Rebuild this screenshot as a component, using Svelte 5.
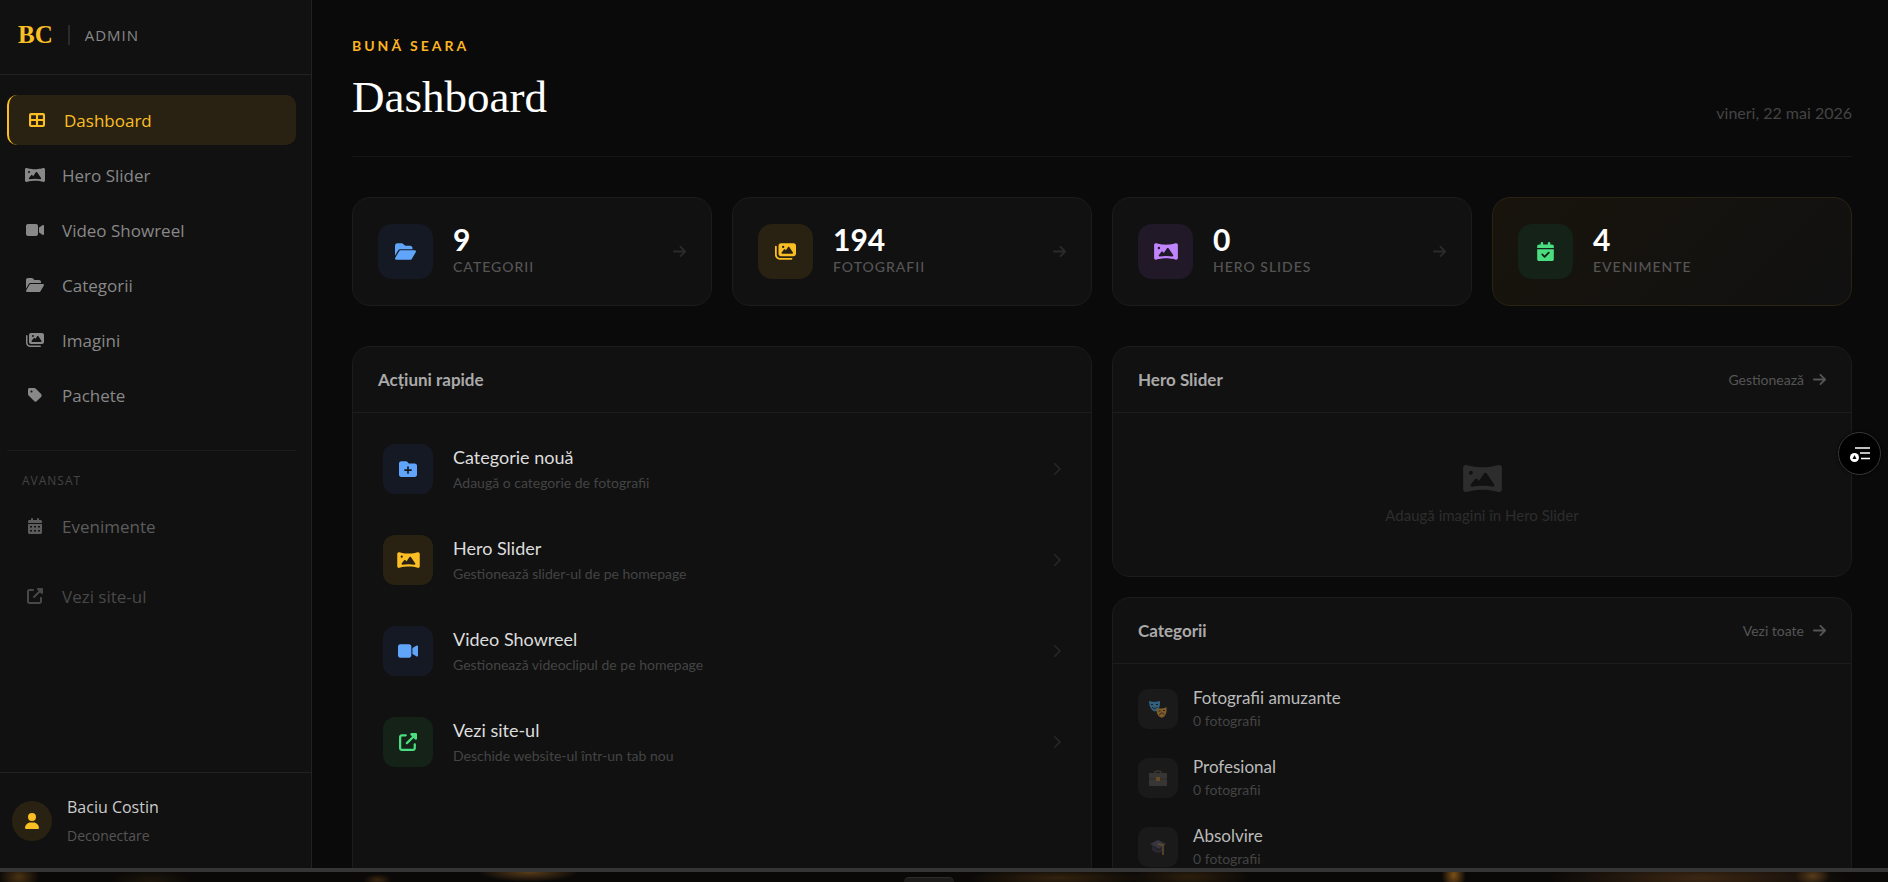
<script>
  const icons = {
    grid: { w: 512, d: 'M64 32H448a64 64 0 0 1 64 64V416a64 64 0 0 1-64 64H64a64 64 0 0 1-64-64V96A64 64 0 0 1 64 32zM68 100V226H222V100zM290 100V226H444V100zM68 290V412H222V290zM290 290V412H444V290z' },
    panorama: { w: 640, d: 'M45.6 32C20.4 32 0 52.4 0 77.6V434.4C0 459.6 20.4 480 45.6 480c5.1 0 10-.8 14.7-2.4C74.6 472.8 177.6 440 320 440s245.4 32.8 259.6 37.6c4.7 1.6 9.7 2.4 14.7 2.4c25.2 0 45.6-20.4 45.6-45.6V77.6C640 52.4 619.6 32 594.4 32c-5 0-10 .8-14.7 2.4C565.4 39.2 462.4 72 320 72S74.6 39.2 60.4 34.4C55.6 32.8 50.7 32 45.6 32zM96 160a32 32 0 1 1 64 0 32 32 0 1 1 -64 0zm272 0c7.9 0 15.4 3.9 19.8 10.5L512.3 353c5.4 8 5.6 18.4 .4 26.5s-14.7 12.3-24.2 10.7C442.7 382.4 385.2 376 320 376c-65.6 0-123.4 6.5-169.3 14.4c-9.8 1.7-19.7-2.9-24.7-11.5s-4.3-19.4 1.9-27.2L197.3 265c4.6-5.7 11.4-9 18.7-9s14.2 3.3 18.7 9l26.4 33.1 87-127.6c4.5-6.6 11.9-10.5 19.8-10.5z' },
    video: { w: 576, d: 'M0 128C0 92.7 28.7 64 64 64H320c35.3 0 64 28.7 64 64V384c0 35.3-28.7 64-64 64H64c-35.3 0-64-28.7-64-64V128zM559.1 99.8c10.4 5.6 16.9 16.4 16.9 28.2V384c0 11.8-6.5 22.6-16.9 28.2s-23 5-32.9-1.6l-96-64L416 337.1V320 192 174.9l14.2-9.5 96-64c9.8-6.5 22.4-7.2 32.9-1.6z' },
    folder: { w: 576, d: 'M88.7 223.8L0 375.8V96C0 60.7 28.7 32 64 32H181.5c17 0 33.3 6.7 45.3 18.7l26.5 26.5c12 12 28.3 18.7 45.3 18.7H416c35.3 0 64 28.7 64 64v32H144c-22.8 0-43.8 12.1-55.3 31.8zm27.6 16.1C122.1 230 132.6 224 144 224H544c11.5 0 22 6.1 27.7 16.1s5.7 22.2-.1 32.1l-112 192C453.9 474 443.4 480 432 480H32c-11.5 0-22-6.1-27.7-16.1s-5.7-22.2 .1-32.1l112-192z' },
    images: { w: 576, d: 'M160 32c-35.3 0-64 28.7-64 64V320c0 35.3 28.7 64 64 64H512c35.3 0 64-28.7 64-64V96c0-35.3-28.7-64-64-64H160zM396 138.7l96 144c4.9 7.4 5.4 16.8 1.2 24.6S480.9 320 472 320H328 280 200c-9.2 0-17.6-5.3-21.6-13.6s-2.9-18.2 2.9-25.4l64-80c4.6-5.7 11.4-9 18.7-9s14.2 3.3 18.7 9l17.3 21.6 56-84C360.5 132 368 128 376 128s15.5 4 20 10.7zM192 128a32 32 0 1 1 64 0 32 32 0 1 1 -64 0zM48 120c0-13.3-10.7-24-24-24S0 106.7 0 120V344c0 75.1 60.9 136 136 136H456c13.3 0 24-10.7 24-24s-10.7-24-24-24H136c-48.6 0-88-39.4-88-88V120z' },
    tag: { w: 448, d: 'M0 80V229.5c0 17 6.7 33.3 18.7 45.3l176 176c25 25 65.5 25 90.5 0L418.7 317.3c25-25 25-65.5 0-90.5l-176-176c-12-12-28.3-18.7-45.3-18.7H48C21.5 32 0 53.5 0 80zm112 32a32 32 0 1 1 0 64 32 32 0 1 1 0-64z' },
    calendar: { w: 448, d: 'M96 32a32 32 0 0 1 64 0V64H288V32a32 32 0 0 1 64 0V64h48c26.5 0 48 21.5 48 48v48H0V112C0 85.5 21.5 64 48 64H96zM0 192H448V464c0 26.5-21.5 48-48 48H48c-26.5 0-48-21.5-48-48zM64 256v48h64v-48zM192 256v48h64v-48zM320 256v48h64v-48zM64 384v48h64v-48zM192 384v48h64v-48zM320 384v48h64v-48z' },
    calendarCheck: { w: 448, d: 'M128 0c17.7 0 32 14.3 32 32V64H288V32c0-17.7 14.3-32 32-32s32 14.3 32 32V64h48c26.5 0 48 21.5 48 48v48H0V112C0 85.5 21.5 64 48 64H96V32c0-17.7 14.3-32 32-32zM0 192H448V464c0 26.5-21.5 48-48 48H48c-26.5 0-48-21.5-48-48V192zM329 305c9.4-9.4 9.4-24.6 0-33.9s-24.6-9.4-33.9 0l-95 95-47-47c-9.4-9.4-24.6-9.4-33.9 0s-9.4 24.6 0 33.9l64 64c9.4 9.4 24.6 9.4 33.9 0L329 305z' },
    external: { w: 512, d: 'M352 0c-12.9 0-24.6 7.8-29.6 19.8s-2.2 25.7 6.9 34.9L370.7 96 201.4 265.4c-12.5 12.5-12.5 32.8 0 45.3s32.8 12.5 45.3 0L416 141.3l41.4 41.4c9.2 9.2 22.9 11.9 34.9 6.9s19.8-16.6 19.8-29.6V32c0-17.7-14.3-32-32-32H352zM80 32C35.8 32 0 67.8 0 112V432c0 44.2 35.8 80 80 80H400c44.2 0 80-35.8 80-80V320c0-17.7-14.3-32-32-32s-32 14.3-32 32V432c0 8.8-7.2 16-16 16H80c-8.8 0-16-7.2-16-16V112c0-8.8 7.2-16 16-16H192c17.7 0 32-14.3 32-32s-14.3-32-32-32H80z' },
    user: { w: 448, d: 'M224 256A128 128 0 1 0 224 0a128 128 0 1 0 0 256zm-45.7 48C79.8 304 0 383.8 0 482.3C0 498.7 13.3 512 29.7 512H418.3c16.4 0 29.7-13.3 29.7-29.7C448 383.8 368.2 304 269.7 304H178.3z' },
    folderPlus: { w: 512, d: 'M512 416c0 35.3-28.7 64-64 64H64c-35.3 0-64-28.7-64-64V96C0 60.7 28.7 32 64 32H192c20.1 0 39.1 9.5 51.2 25.6l19.2 25.6c6 8.1 15.5 12.8 25.6 12.8H448c35.3 0 64 28.7 64 64V416zM232 376c0 13.3 10.7 24 24 24s24-10.7 24-24V312h64c13.3 0 24-10.7 24-24s-10.7-24-24-24H280V200c0-13.3-10.7-24-24-24s-24 10.7-24 24v64H168c-13.3 0-24 10.7-24 24s10.7 24 24 24h64v64z' },
    arrow: { w: 448, d: 'M438.6 278.6c12.5-12.5 12.5-32.8 0-45.3l-160-160c-12.5-12.5-32.8-12.5-45.3 0s-12.5 32.8 0 45.3L338.8 224 32 224c-17.7 0-32 14.3-32 32s14.3 32 32 32l306.7 0L233.4 393.4c-12.5 12.5-12.5 32.8 0 45.3s32.8 12.5 45.3 0l160-160z' },
    chevron: { w: 320, d: 'M310.6 233.4c12.5 12.5 12.5 32.8 0 45.3l-192 192c-12.5 12.5-32.8 12.5-45.3 0s-12.5-32.8 0-45.3L242.7 256 73.4 86.6c-12.5-12.5-12.5-32.8 0-45.3s32.8-12.5 45.3 0l192 192z' }
  };

  const navItems = [
    { icon: 'grid', label: 'Dashboard', active: true },
    { icon: 'panorama', label: 'Hero Slider' },
    { icon: 'video', label: 'Video Showreel' },
    { icon: 'folder', label: 'Categorii' },
    { icon: 'images', label: 'Imagini' },
    { icon: 'tag', label: 'Pachete' }
  ];

  const stats = [
    { icon: 'folder', color: 'blue', value: 9, label: 'Categorii' },
    { icon: 'images', color: 'gold', value: 194, label: 'Fotografii' },
    { icon: 'panorama', color: 'purple', value: 0, label: 'Hero Slides' },
    { icon: 'calendarCheck', color: 'green', value: 4, label: 'Evenimente', highlight: true }
  ];

  const actions = [
    { icon: 'folderPlus', color: 'blue', title: 'Categorie nouă', text: 'Adaugă o categorie de fotografii' },
    { icon: 'panorama', color: 'gold', title: 'Hero Slider', text: 'Gestionează slider-ul de pe homepage' },
    { icon: 'video', color: 'blue', title: 'Video Showreel', text: 'Gestionează videoclipul de pe homepage' },
    { icon: 'external', color: 'green', title: 'Vezi site-ul', text: 'Deschide website-ul într-un tab nou' }
  ];

  const categories = [
    { emoji: 'masks', name: 'Fotografii amuzante', count: 0 },
    { emoji: 'briefcase', name: 'Profesional', count: 0 },
    { emoji: 'cap', name: 'Absolvire', count: 0 }
  ];
</script>

{#snippet icon(name, size)}
  <svg class="icon" height={size} width={Math.round(size * icons[name].w / 512)} viewBox="0 0 {icons[name].w} 512" aria-hidden="true">
    <path fill="currentColor" fill-rule="evenodd" d={icons[name].d} />
  </svg>
{/snippet}

<div class="page">
  <div class="window">
    <aside class="sidebar">
      <div class="brand">
        <span class="logo">BC</span>
        <span class="brand-sep"></span>
        <span class="brand-text">ADMIN</span>
      </div>

      <nav class="nav">
        {#each navItems as item}
          <a href="#top" class="nav-item" class:active={item.active}>
            <span class="nav-icon">{@render icon(item.icon, 16)}</span>
            {item.label}
          </a>
        {/each}
        <hr class="nav-divider" />
        <span class="nav-label">AVANSAT</span>
        <a href="#top" class="nav-item dim">
          <span class="nav-icon">{@render icon('calendar', 16)}</span>
          Evenimente
        </a>
        <a href="#top" class="nav-item dimmer">
          <span class="nav-icon">{@render icon('external', 16)}</span>
          Vezi site-ul
        </a>
      </nav>

      <div class="account">
        <span class="avatar">{@render icon('user', 16)}</span>
        <div class="account-text">
          <span class="account-name">Baciu Costin</span>
          <button class="logout" type="button">Deconectare</button>
        </div>
      </div>
    </aside>

    <main class="main">
      <header class="header">
        <div>
          <p class="greeting">BUNĂ SEARA</p>
          <h1>Dashboard</h1>
        </div>
        <span class="date">vineri, 22 mai 2026</span>
      </header>

      <section class="stats">
        {#each stats as stat}
          <a href="#top" class="stat" class:highlight={stat.highlight}>
            <span class="stat-icon {stat.color}">{@render icon(stat.icon, 19)}</span>
            <span class="stat-text">
              <span class="stat-value">{stat.value}</span>
              <span class="stat-label">{stat.label}</span>
            </span>
            {#if !stat.highlight}
              <span class="stat-arrow">{@render icon('arrow', 15)}</span>
            {/if}
          </a>
        {/each}
      </section>

      <div class="panels">
        <section class="panel">
          <div class="panel-head">
            <h2>Acțiuni rapide</h2>
          </div>
          <div class="panel-body">
            {#each actions as action}
              <a href="#top" class="action">
                <span class="action-icon {action.color}">{@render icon(action.icon, 18)}</span>
                <span class="action-text">
                  <span class="action-title">{action.title}</span>
                  <span class="action-desc">{action.text}</span>
                </span>
                <span class="chevron">{@render icon('chevron', 14)}</span>
              </a>
            {/each}
          </div>
        </section>

        <div class="panel-column">
          <section class="panel">
            <div class="panel-head">
              <h2>Hero Slider</h2>
              <a href="#top" class="panel-link">Gestionează {@render icon('arrow', 15)}</a>
            </div>
            <div class="empty">
              {@render icon('panorama', 31)}
              <p>Adaugă imagini în Hero Slider</p>
            </div>
          </section>

          <section class="panel">
            <div class="panel-head">
              <h2>Categorii</h2>
              <a href="#top" class="panel-link">Vezi toate {@render icon('arrow', 15)}</a>
            </div>
            <div class="panel-body">
              {#each categories as category}
                <a href="#top" class="category">
                  <span class="category-icon">
                    <svg width="18" height="18" viewBox="0 0 18 18" aria-hidden="true">
                      {#if category.emoji === 'masks'}
                        <path fill="#4aa3df" d="M0 1c3 1 8 1 11 0 .6 5-1 9-5 10.500C2 10.500 0 6 0 1z" />
                        <path fill="none" stroke="#10222e" d="M2 4.500h2M7 4.500h2M3 7c2 2 4 2 5.500 0" />
                        <path fill="#e0a040" d="M7.500 8c3 1 7 .5 10-.8.5 5-.5 9-4.500 10.500C9 17 7 13 7.500 8z" />
                        <path fill="none" stroke="#3a250c" d="M9.500 11h2M14 10.500h2M10.500 15c1-2.500 3.500-2.500 4.500-.5" />
                      {:else if category.emoji === 'briefcase'}
                        <path fill="none" stroke="#5a504c" stroke-width="1.500" d="M6 5V3.500Q6 2 9 2t3 1.500V5" />
                        <rect y="4" width="18" height="13" rx="1" fill="#575150" />
                        <path stroke="#403936" d="M0 10h18" />
                        <rect x="7" y="8" width="4" height="4" fill="#b07a30" />
                      {:else}
                        <path fill="#555366" d="M1 6l8-4 8 4-7 5z" />
                        <path fill="#383547" d="M3 8l7 4 4-3v4c-3 3-8 2-11-1z" />
                        <path fill="none" stroke="#b08238" stroke-width="1.500" d="M9 6l5 1v10" />
                      {/if}
                    </svg>
                  </span>
                  <span class="category-text">
                    <span class="category-name">{category.name}</span>
                    <span class="category-count">{category.count} fotografii</span>
                  </span>
                </a>
              {/each}
            </div>
          </section>
        </div>
      </div>
    </main>

    <button class="floating" type="button" aria-label="Meniu">
      <svg width="22" height="18" viewBox="0 0 22 18" aria-hidden="true">
        <path stroke="#fff" stroke-width="1.500" d="M6 3h15M11 8h10M12 13.500h9" />
        <circle cx="5.500" cy="12.500" r="4.500" fill="#fff" />
        <path fill="#000" d="M5.500 10l2 4h-4z" />
      </svg>
    </button>
  </div>

  <div class="taskbar">
    <span class="taskbar-tab"></span>
  </div>
</div>

<style>
  :global(body) {
    margin: 0;
    background: #0a0a0a;
  }

  .page {
    display: flex;
    flex-direction: column;
    height: 100vh;
    overflow: hidden;
    font-family: Lato, 'Open Sans', sans-serif;
    color: #fff;
  }

  .page :global(*) {
    box-sizing: border-box;
  }

  a {
    color: inherit;
    text-decoration: none;
  }

  button {
    padding: 0;
    border: none;
    background: none;
    font: inherit;
    color: inherit;
    cursor: pointer;
  }

  h1, h2, p {
    margin: 0;
  }

  .icon {
    display: block;
    flex: none;
  }

  .window {
    position: relative;
    display: flex;
    flex: 1;
    min-height: 0;
    overflow: hidden;
  }

  /* Sidebar */
  .sidebar {
    display: flex;
    flex-direction: column;
    flex: none;
    width: 312px;
    background: #111;
    border-right: 1px solid #222;
    font-family: 'Open Sans', 'Noto Sans', sans-serif;
  }

  .brand {
    display: flex;
    align-items: center;
    height: 75px;
    padding: 0 18px 4px;
    border-bottom: 1px solid #222;
  }

  .logo {
    font-family: 'Liberation Serif', serif;
    font-size: 25px;
    font-weight: bold;
    color: #fbbf24;
  }

  .brand-sep {
    width: 2px;
    height: 20px;
    margin: 0 15px 0 15px;
    background: #2a2a2a;
  }

  .brand-text {
    font-size: 15px;
    letter-spacing: 1px;
    color: #888;
  }

  .nav {
    display: flex;
    flex-direction: column;
    flex: 1;
    gap: 5px;
    padding: 20px 15px 0 7px;
  }

  .nav-item {
    display: flex;
    align-items: center;
    gap: 15px;
    height: 50px;
    padding: 0 15px;
    border-radius: 10px;
    font-size: 17px;
    color: #888;
  }

  .nav-item.active {
    border-left: 2px solid #fbbf24;
    background: #292212;
    color: #fbbf24;
  }

  .nav-item.dim {
    color: #5c5c5c;
  }

  .nav-item.dimmer {
    margin-top: 15px;
    color: #484848;
  }

  .nav-icon {
    display: flex;
    justify-content: center;
    width: 25px;
  }

  .nav-divider {
    width: 100%;
    height: 1px;
    margin: 25px 0 15px;
    border: none;
    background: #1c1c1c;
  }

  .nav-label {
    margin-bottom: 5px;
    padding-left: 15px;
    font-size: 12px;
    font-weight: 500;
    line-height: 20px;
    letter-spacing: 1px;
    color: #444;
  }

  .account {
    display: flex;
    align-items: center;
    gap: 15px;
    height: 96px;
    padding: 0 12px;
    border-top: 1px solid #222;
  }

  .avatar {
    display: flex;
    align-items: center;
    justify-content: center;
    width: 40px;
    height: 40px;
    border-radius: 50%;
    background: #292212;
    color: #fbbf24;
  }

  .account-text {
    display: flex;
    flex-direction: column;
    align-items: flex-start;
  }

  .account-name {
    font-size: 16px;
    line-height: 30px;
    color: #ccc;
  }

  .logout {
    font-size: 14px;
    line-height: 28px;
    color: #555;
  }

  /* Main area */
  .main {
    flex: 1;
    min-width: 0;
    padding: 34px 36px 40px 40px;
    background: #0a0a0a;
  }

  .header {
    display: flex;
    align-items: flex-end;
    justify-content: space-between;
    margin-bottom: 40px;
    padding-bottom: 30px;
    border-bottom: 1px solid #161616;
  }

  .greeting {
    font-size: 14px;
    font-weight: bold;
    line-height: 24px;
    letter-spacing: 3px;
    color: #fbb424;
  }

  h1 {
    margin-top: 10px;
    font-family: 'Liberation Serif', serif;
    font-size: 45px;
    font-weight: normal;
    line-height: 58px;
  }

  .date {
    font-size: 16px;
    line-height: 26px;
    color: #444;
  }

  .stats {
    display: grid;
    grid-template-columns: repeat(4, 1fr);
    gap: 20px;
    margin-bottom: 40px;
  }

  .stat {
    display: flex;
    align-items: center;
    gap: 20px;
    padding: 26px 25px;
    border: 1px solid #1c1c1c;
    border-radius: 18px;
    background: #111;
  }

  .stat.highlight {
    border-color: #2b2312;
    background: linear-gradient(135deg, #18140c, #111 95%);
  }

  .stat-icon {
    display: flex;
    align-items: center;
    justify-content: center;
    width: 55px;
    height: 55px;
    border-radius: 14px;
  }

  .blue {
    background: #141924;
    color: #60a5fa;
  }

  .gold {
    background: #292212;
    color: #fbbf24;
  }

  .purple {
    background: #211828;
    color: #c084fc;
  }

  .green {
    background: #142217;
    color: #4ade80;
  }

  .stat-text {
    display: flex;
    flex: 1;
    flex-direction: column;
  }

  .stat-value {
    font-size: 30px;
    font-weight: bold;
    line-height: 31px;
  }

  .stat-label {
    font-size: 14px;
    font-weight: 500;
    line-height: 24px;
    letter-spacing: 1px;
    text-transform: uppercase;
    color: #555;
  }

  .stat-arrow {
    color: #2b2b2b;
  }

  .panels {
    display: grid;
    grid-template-columns: 1fr 1fr;
    gap: 20px;
  }

  .panel-column {
    display: flex;
    flex-direction: column;
    gap: 20px;
  }

  .panel {
    border: 1px solid #1c1c1c;
    border-radius: 18px;
    background: #111;
  }

  .panel-head {
    display: flex;
    align-items: center;
    justify-content: space-between;
    height: 66px;
    padding: 0 25px;
    border-bottom: 1px solid #1c1c1c;
  }

  h2 {
    font-size: 17px;
    font-weight: bold;
    color: #aaa;
  }

  .panel-link {
    display: flex;
    align-items: center;
    gap: 9px;
    font-size: 14px;
    color: #555;
  }

  .panel-body {
    padding: 10px;
  }

  .action {
    display: flex;
    align-items: center;
    gap: 20px;
    padding: 20px;
  }

  .action-icon {
    display: flex;
    align-items: center;
    justify-content: center;
    width: 50px;
    height: 50px;
    border-radius: 12px;
  }

  .action-text {
    display: flex;
    flex: 1;
    flex-direction: column;
  }

  .action-title {
    font-size: 18px;
    line-height: 28px;
    color: #ddd;
  }

  .action-desc {
    font-size: 14px;
    line-height: 23px;
    color: #444;
  }

  .chevron {
    color: #262626;
  }

  .empty {
    display: flex;
    flex-direction: column;
    align-items: center;
    gap: 10px;
    padding: 50px 20px;
    color: #2d2d2d;
  }

  .empty p {
    font-size: 15px;
    line-height: 22px;
  }

  .category {
    display: flex;
    align-items: center;
    gap: 15px;
    padding: 12px 15px 11px;
  }

  .category-icon {
    display: flex;
    align-items: center;
    justify-content: center;
    width: 40px;
    height: 40px;
    border-radius: 10px;
    background: #1a1a1a;
  }

  .category-icon svg {
    opacity: 0.5;
  }

  .category-text {
    display: flex;
    flex-direction: column;
  }

  .category-name {
    font-size: 17px;
    line-height: 24px;
    color: #bbb;
  }

  .category-count {
    font-size: 14px;
    line-height: 22px;
    color: #444;
  }

  .floating {
    position: absolute;
    top: calc(50% - 2px);
    right: 7px;
    display: flex;
    align-items: center;
    justify-content: center;
    width: 43px;
    height: 43px;
    border: 1px solid #3a3a3a;
    border-radius: 50%;
    background: #000;
    box-shadow: 0 0 3px #000;
  }

  /* Strip of the desktop below the window */
  .taskbar {
    display: flex;
    flex: none;
    align-items: flex-end;
    justify-content: center;
    height: 14px;
    padding-right: 30px;
    border-top: 4px solid #353535;
    background:
      radial-gradient(ellipse 20px 14px at 1% 50%, #4a3212, transparent),
      radial-gradient(ellipse 40px 12px at 8% 90%, #1c150b, transparent),
      radial-gradient(ellipse 50px 10px at 28% 0%, #5a3d1a, transparent),
      radial-gradient(ellipse 14px 6px at 20% 80%, #3a260e, transparent),
      radial-gradient(ellipse 90px 10px at 56% 60%, #33220d, transparent),
      radial-gradient(ellipse 60px 12px at 63% 50%, #2c1e0c, transparent),
      radial-gradient(ellipse 12px 16px at 77% 30%, #7a5018, transparent),
      radial-gradient(ellipse 150px 18px at 90% 60%, #3c2713, transparent),
      radial-gradient(ellipse 18px 10px at 96% 40%, #60421c, transparent),
      #0b0907;
  }

  .taskbar-tab {
    width: 50px;
    height: 5px;
    border-top: 1px solid #2c2c2c;
    border-radius: 5px 5px 0 0;
    background: #1c1b1a;
  }
</style>
